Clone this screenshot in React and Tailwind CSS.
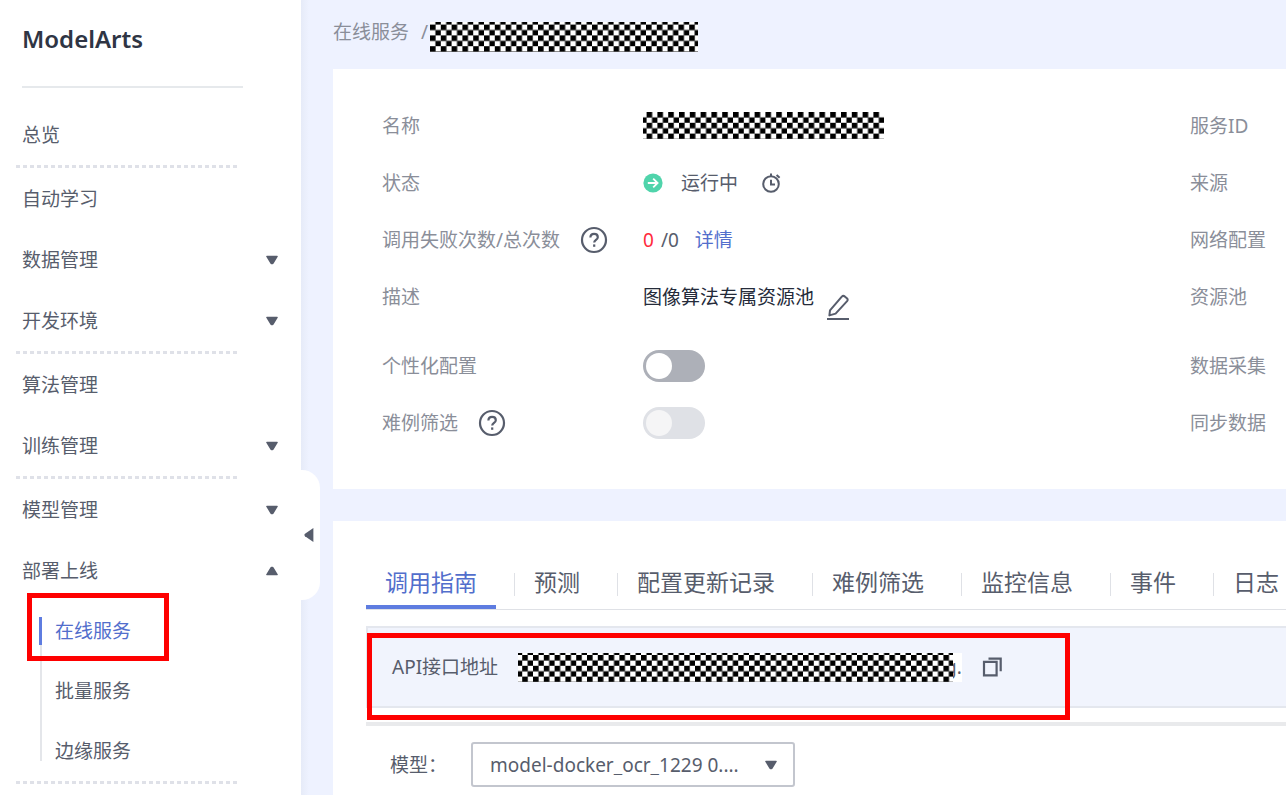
import React, { useId, useState } from 'react';
import clsx from 'clsx';

const navGroups = [
  [{ label: '总览' }],
  [{ label: '自动学习' }, { label: '数据管理', arrow: 'down' }, { label: '开发环境', arrow: 'down' }],
  [{ label: '算法管理' }, { label: '训练管理', arrow: 'down' }],
  [
    { label: '模型管理', arrow: 'down' },
    { label: '部署上线', arrow: 'up', children: ['在线服务', '批量服务', '边缘服务'] },
  ],
];

const tabs = ['调用指南', '预测', '配置更新记录', '难例筛选', '监控信息', '事件', '日志'];

// checkerboard that hides private values
const Mosaic = ({ width, height, x = 0, y = 0 }) => {
  const id = useId();
  return (
    <svg width={width} height={height} className="relative shrink-0" aria-hidden="true">
      <defs>
        <pattern id={id} x={x} y={y} width="10.8" height="10.8" patternUnits="userSpaceOnUse">
          <rect width="5.6" height="5.6" />
          <rect x="5.4" y="5.4" width="5.4" height="5.4" />
        </pattern>
      </defs>
      <rect width={width} height={height} fill="#fff" />
      <rect width={width} height={height} fill={`url(#${id})`} />
    </svg>
  );
};

const Triangle = ({ className }) => (
  <svg viewBox="0 0 12 10" className={clsx('h-[10px] w-3 shrink-0 fill-[#575d6c]', className)} aria-hidden="true">
    <path d="M0.8 0.8h10.4q1 0 0.5 0.9L7.6 8.4q-0.4 0.8-1.1 0.8h-1q-0.7 0-1.1-0.8L0.3 1.7q-0.5-0.9 0.5-0.9z" />
  </svg>
);

const HelpIcon = () => (
  <svg viewBox="0 0 28 28" className="h-7 w-7 shrink-0" fill="none" stroke="#575d6c" strokeWidth="2.2" aria-hidden="true">
    <circle cx="14" cy="14" r="12" />
    <path d="M10.4 11.6c0-2.3 1.5-3.7 3.7-3.7s3.7 1.4 3.7 3.3c0 2.7-3.6 2.8-3.6 5.4" />
    <path d="M14.2 18.4v2.4" />
  </svg>
);

const RunningIcon = () => (
  <svg viewBox="0 0 20 20" className="h-5 w-5 shrink-0" aria-hidden="true">
    <circle cx="10" cy="10" r="9.6" fill="#50d4ab" />
    <path d="M4.8 10h9M10.2 5.6l4.4 4.4-4.4 4.4" fill="none" stroke="#fff" strokeWidth="1.8" />
  </svg>
);

const TimerIcon = () => (
  <svg viewBox="0 0 20 20" className="h-5 w-5 shrink-0" fill="none" stroke="#575d6c" strokeWidth="2" aria-hidden="true">
    <circle cx="10" cy="11" r="7.8" />
    <path d="M10 0.6v3M10 6.8v4.6h4M15.6 2l3 2.8" />
  </svg>
);

const EditIcon = () => (
  <svg viewBox="0 0 24 26" className="h-[26px] w-6" fill="none" stroke="#575d6c" strokeWidth="2" aria-hidden="true">
    <path d="M4 16.4 15.8 2.6q1.4-1.4 2.9-0.2l2.2 1.9q1.4 1.3 0.2 2.8L9.6 19.6 3.4 21.4z" strokeLinejoin="round" />
    <path d="M1 25h22" />
  </svg>
);

const CopyIcon = () => (
  <svg viewBox="0 0 20 20" className="h-5 w-5" fill="none" stroke="#575d6c" strokeWidth="2.2" aria-hidden="true">
    <path d="M2 4.8h12.6v13.6H2z" />
    <path d="M6.5 1.6h12.2v12.6" />
  </svg>
);

const Toggle = ({ id, disabled }) => (
  <input
    id={id}
    type="checkbox"
    role="switch"
    disabled={disabled}
    className="h-8 w-[62px] appearance-none rounded-full bg-[#adb0b8] p-[3px] before:block before:h-[26px] before:w-[26px] before:rounded-full before:bg-white checked:bg-[#5e7ce0] checked:before:ml-[30px] disabled:bg-[#dfe1e6] disabled:before:bg-[#f5f5f6]"
  />
);

const InfoRow = ({ label, htmlFor, help, side, className, children }) => (
  <div className={clsx('grid h-[57px] grid-cols-[261px_1fr_96px] items-center', className)}>
    <div className="flex items-center gap-5 text-[#8a8e99]">
      {htmlFor ? <label htmlFor={htmlFor}>{label}</label> : <span>{label}</span>}
      {help && <HelpIcon />}
    </div>
    <div className="flex items-center">{children}</div>
    <div className="text-[#8a8e99]">{side}</div>
  </div>
);

const Sidebar = () => (
  <aside className="relative w-[301px] shrink-0 bg-white">
    <h1 className="ml-[22px] mr-[58px] flex h-[88px] items-center border-b-2 border-[#e6e9ec] pb-2 text-2xl font-semibold text-[#2f3544]">
      ModelArts
    </h1>
    <nav className="pt-4">
      {navGroups.map((group) => (
        <div key={group[0].label}>
          {group.map((item) => (
            <div key={item.label}>
              <button type="button" className="flex h-[61px] w-full items-center justify-between pl-[22px] pr-[23px]">
                {item.label}
                {item.arrow && <Triangle className={item.arrow === 'up' ? 'rotate-180' : ''} />}
              </button>
              {item.children && (
                <ul className="relative">
                  <li className="absolute bottom-5 left-10 top-4 w-[2px] bg-[#e4e6ea]" aria-hidden="true" />
                  {item.children.map((child, i) => (
                    <li key={child} className="relative flex h-[60px] items-center pl-[55px]">
                      {i === 0 && <span className="absolute left-[39px] top-4 h-7 w-[3px] bg-[#5e7ce0]" />}
                      <a href="#" className={i === 0 ? 'text-[#526ecc]' : ''}>{child}</a>
                      {i === 0 && <span className="absolute -top-2 left-[27px] h-[68px] w-[142px] border-5 border-[#fe0000]" />}
                    </li>
                  ))}
                </ul>
              )}
            </div>
          ))}
          <div className="ml-4 mr-16 h-[3px] bg-[repeating-linear-gradient(90deg,#dfe1e8_0_4px,transparent_4px_7px)]" />
        </div>
      ))}
    </nav>
    <button
      type="button"
      aria-label="收起"
      className="absolute left-full top-[470px] z-10 flex h-[130px] w-[19px] items-center rounded-r-[18px] bg-white pl-[3px]"
    >
      <svg viewBox="0 0 10 14" className="h-[14px] w-[10px] fill-[#575d6c]" aria-hidden="true">
        <path d="M9.4 0v14L1 8.2Q-0.2 7 1 5.8z" />
      </svg>
    </button>
  </aside>
);

const App = () => {
  const [activeTab, setActiveTab] = useState(tabs[0]);

  return (
    <div className="flex min-h-screen bg-[#eef2ff] font-['Noto_Sans','Noto_Sans_CJK_SC',sans-serif] text-[19px] leading-5 text-[#575d6c]">
      <Sidebar />

      <main className="flex min-w-0 flex-1 flex-col overflow-hidden bg-[linear-gradient(90deg,#e6ebf8,#eef2ff_8px)] pl-8">
        <div className="flex h-[69px] items-start pt-[22px] text-[#8a8e99]">
          <a href="#">在线服务</a>
          <span className="mx-3 -mr-px w-[10px]">/</span>
          <Mosaic width={268} height={30} y={2.6} />
        </div>

        <section className="h-[420px] bg-white pl-[49px] pt-7">
          <InfoRow label="名称" side="服务ID">
            <Mosaic width={241} height={27} x={3.6} />
          </InfoRow>
          <InfoRow label="状态" side="来源">
            <RunningIcon />
            <span className="ml-[18px] mr-[23px]">运行中</span>
            <TimerIcon />
          </InfoRow>
          <InfoRow label="调用失败次数/总次数" help side="网络配置">
            <span className="text-[#ff2a3c]">0</span>
            <span className="ml-[7px] mr-4">/0</span>
            <a href="#" className="text-[#526ecc]">详情</a>
          </InfoRow>
          <InfoRow label="描述" side="资源池" className="mb-3">
            <span className="text-[#252b3a]">图像算法专属资源池</span>
            <button type="button" aria-label="编辑描述" className="ml-3 mt-5">
              <EditIcon />
            </button>
          </InfoRow>
          <InfoRow label="个性化配置" htmlFor="custom-config" side="数据采集">
            <Toggle id="custom-config" />
          </InfoRow>
          <InfoRow label="难例筛选" htmlFor="hard-case" help side="同步数据">
            <Toggle id="hard-case" disabled />
          </InfoRow>
        </section>

        <section className="mt-8 flex-1 bg-white pl-[33px] pt-[38px]">
          <div role="tablist" className="flex border-b border-[#dfe1e6] text-[23px]">
            {tabs.map((tab, i) => (
              <React.Fragment key={tab}>
                {i > 0 && <span className="ml-[18px] mt-[14px] h-[23px] w-px shrink-0 bg-[#dfe1e6]" />}
                <button
                  type="button"
                  role="tab"
                  aria-selected={tab === activeTab}
                  onClick={() => setActiveTab(tab)}
                  className={clsx(
                    'h-[50px] shrink-0 whitespace-nowrap border-b-4 px-[19px]',
                    tab === activeTab ? 'border-[#5e7ce0] text-[#526ecc]' : 'border-transparent'
                  )}
                >
                  {tab}
                </button>
              </React.Fragment>
            ))}
          </div>

          <div className="relative mt-4 flex h-[82px] items-center border-y-2 border-l-2 border-[#e4e7ee] bg-[#f1f4fd] pl-6">
            <span className="mr-5">API接口地址</span>
            <div className="flex items-center bg-white">
              <Mosaic width={435} height={29} x={4.2} y={2} />
              <span className="-ml-2">g.</span>
            </div>
            <button type="button" aria-label="复制" className="ml-5">
              <CopyIcon />
            </button>
            <span className="absolute -left-px top-[5px] h-[87px] w-[703px] border-5 border-[#fe0000]" />
          </div>

          <div className="mt-[14px] h-1 bg-[#e9eaec]" />

          <div className="mt-4 flex items-center pl-6">
            <label htmlFor="model">模型：</label>
            <div className="relative ml-6">
              <select
                id="model"
                className="h-[45px] w-[324px] appearance-none rounded-[3px] border-2 border-[#c3c6ce] bg-white pl-[17px] pr-12"
              >
                <option>model-docker_ocr_1229 0....</option>
              </select>
              <Triangle className="pointer-events-none absolute right-[18px] top-[18px]" />
            </div>
          </div>
        </section>
      </main>
    </div>
  );
};

export default App;
